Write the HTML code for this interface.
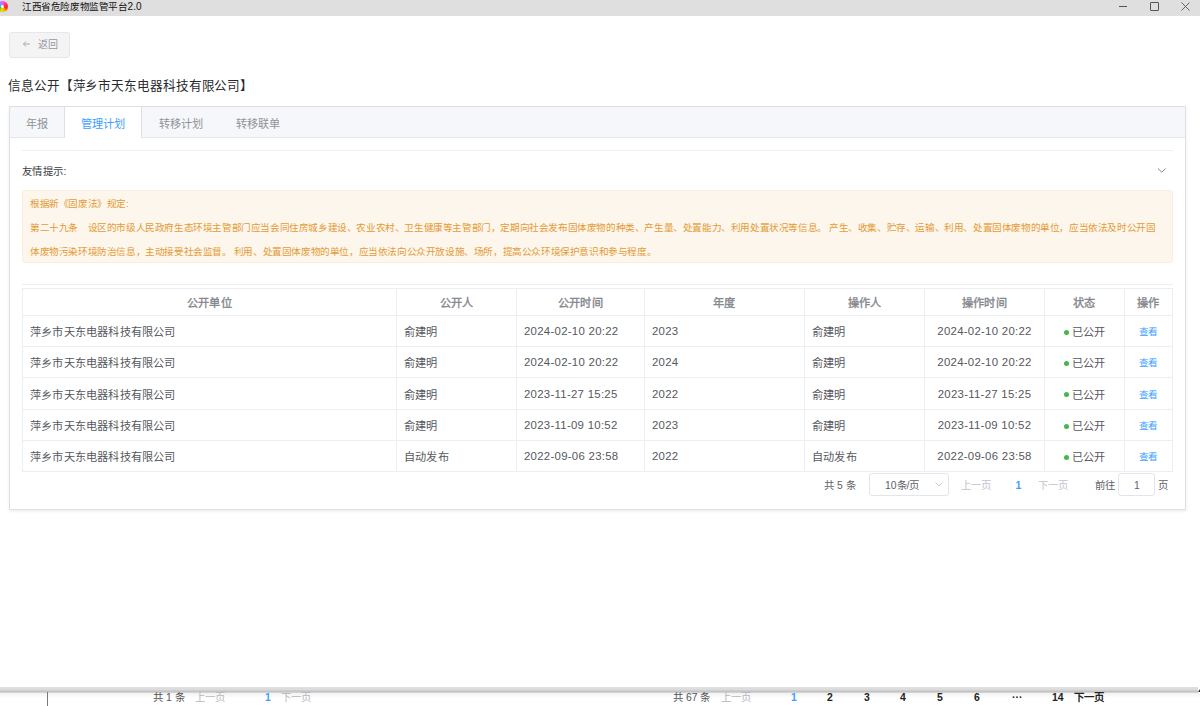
<!DOCTYPE html>
<html lang="zh-CN"><head><meta charset="utf-8">
<style>
*{box-sizing:border-box;margin:0;padding:0}
html,body{width:1200px;height:706px;overflow:hidden;background:#fff;font-family:"Liberation Sans",sans-serif;position:relative}
.abs{position:absolute;white-space:nowrap}
#titlebar{left:0;top:0;width:1200px;height:16px;background:#dfdfdf}
#title{left:22px;top:0;height:16px;line-height:14px;font-size:9.6px;letter-spacing:-0.4px;color:#111}
#back{left:9px;top:32px;width:61px;height:26px;background:#f4f4f5;border:1px solid #e4e7ed;border-radius:3px}
#backtxt{left:38px;top:36px;line-height:17px;font-size:10px;color:#96989e}
#heading{left:8px;top:77px;line-height:18px;font-size:12.6px;letter-spacing:-0.1px;color:#282a2e}
#card{left:9px;top:106px;width:1177px;height:404px;border:1px solid #dcdfe6;box-shadow:0 1.5px 3px 0 rgba(0,0,0,.07);background:#fff}
#tabhead{left:10px;top:107px;width:1175px;height:31px;background:#f5f7fa;border-bottom:1px solid #e4e7ed}
.tab{position:absolute;top:107px;height:31px;line-height:34px;font-size:11.2px;color:#909399;text-align:center;white-space:nowrap}
.tab.active{background:#fff;color:#409eff;border-left:1px solid #dcdfe6;border-right:1px solid #dcdfe6;height:31px}
#col-top{left:22px;top:150px;width:1151px;height:1px;background:#ebeef5}
#tip{left:22px;top:162px;line-height:19px;font-size:10.4px;letter-spacing:0.4px;color:#3a3b3f}
#alert{left:22px;top:190px;width:1151px;height:73px;background:#fdf6ec;border:1px solid #fbeedc;border-radius:3px}
.al{position:absolute;left:30px;font-size:9.6px;letter-spacing:-0.4px;line-height:12px;color:#e29b36;white-space:nowrap}
#col-bot{left:22px;top:284px;width:1151px;height:1px;background:#ebeef5}
table{position:absolute;left:22px;top:288px;border-collapse:collapse;table-layout:fixed;font-size:11.2px;letter-spacing:0.2px;color:#56585e}
td.d{font-size:11.4px;letter-spacing:0.28px}
td,th{border:1px solid #ebeef5;padding:0 7px;white-space:nowrap;overflow:hidden}
th{height:27px;color:#83868d;font-weight:normal;-webkit-text-stroke:0.35px #83868d;text-align:center}
td{height:31px}
td.c{text-align:center}
tr.r3 td{height:32px}
.dot{display:inline-block;width:5px;height:5px;border-radius:50%;background:#45b649;vertical-align:middle;margin-right:3px;position:relative;top:-1px}
.link{color:#409eff;font-size:9.6px;letter-spacing:-0.4px}
.pg{position:absolute;font-size:10.4px;line-height:14px;color:#606266;white-space:nowrap}
#sel{left:869px;top:473px;width:80px;height:23px;border:1px solid #e2e5eb;border-radius:3px}
#inp{left:1118px;top:473px;width:37px;height:23px;border:1px solid #e2e5eb;border-radius:3px}
#bottom-band{left:0;top:687px;width:1198px;height:6px;background:linear-gradient(#e0e0e0 0,#dadada 3px,#c2c2c2 4px,#c8c8c8 5px,#dedede 6px)}
#bottom-line{display:none}
#bottom-grad{left:0;top:693px;width:1200px;height:13px;background:linear-gradient(#f2f2f2,#fff 5px)}
.bt{position:absolute;top:690px;line-height:16px;font-size:10.4px;white-space:nowrap}
</style></head><body>
<div class="abs" id="titlebar"></div>
<div class="abs" style="left:-3px;top:1px;width:11px;height:11px;border-radius:50%;background:conic-gradient(#ff50ff 0deg,#ff2a2a 80deg,#ff3010 110deg,#ffa800 150deg,#ffd800 190deg,#30d030 240deg,#20c8ff 300deg,#ff50ff 360deg)"></div>
<div class="abs" style="left:1px;top:5px;width:3px;height:3px;border-radius:50%;background:#fff"></div>
<div class="abs" id="title">江西省危险废物监管平台<span style="letter-spacing:0;font-size:10px">2.0</span></div>
<div class="abs" style="left:1119px;top:6px;width:8px;height:1px;background:#555"></div>
<div class="abs" style="left:1150px;top:2px;width:9px;height:9px;border:1px solid #555;border-radius:1px"></div>
<svg class="abs" style="left:1181px;top:2px" width="9" height="9" viewBox="0 0 9 9"><path d="M0.5 0.5L8.5 8.5M8.5 0.5L0.5 8.5" stroke="#555" stroke-width="0.9"/></svg>

<div class="abs" id="back"></div>
<svg class="abs" style="left:22px;top:40px" width="9" height="8" viewBox="0 0 9 8"><path d="M1.5 4H8M4 1.5L1.5 4L4 6.5" stroke="#a0a3aa" stroke-width="0.9" fill="none"/></svg>
<div class="abs" id="backtxt">返回</div>

<div class="abs" id="heading">信息公开【萍乡市天东电器科技有限公司】</div>

<div class="abs" id="card"></div>
<div class="abs" id="tabhead"></div>
<div class="tab" style="left:10px;width:54px">年报</div>
<div class="tab active" style="left:64px;width:78px">管理计划</div>
<div class="tab" style="left:142px;width:77px">转移计划</div>
<div class="tab" style="left:219px;width:77px">转移联单</div>

<div class="abs" id="col-top"></div>
<div class="abs" id="tip">友情提示:</div>
<svg class="abs" style="left:1157px;top:167px" width="10" height="7" viewBox="0 0 10 7"><path d="M1 1.5L4.8 5.2L8.6 1.5" stroke="#6f727a" stroke-width="0.9" fill="none"/></svg>
<div class="abs" id="alert"></div>
<div class="al" style="top:198px">根据新《固废法》规定:</div>
<div class="al" style="top:222px">第二十九条　设区的市级人民政府生态环境主管部门应当会同住房城乡建设、农业农村、卫生健康等主管部门，定期向社会发布固体废物的种类、产生量、处置能力、利用处置状况等信息。 产生、收集、贮存、运输、利用、处置固体废物的单位，应当依法及时公开固</div>
<div class="al" style="top:246px">体废物污染环境防治信息，主动接受社会监督。 利用、处置固体废物的单位，应当依法向公众开放设施、场所，提高公众环境保护意识和参与程度。</div>
<div class="abs" id="col-bot"></div>

<table>
<colgroup><col style="width:374px"><col style="width:120px"><col style="width:128px"><col style="width:160px"><col style="width:120px"><col style="width:120px"><col style="width:80px"><col style="width:48px"></colgroup>
<tr><th>公开单位</th><th>公开人</th><th>公开时间</th><th>年度</th><th>操作人</th><th>操作时间</th><th>状态</th><th>操作</th></tr>
<tr><td>萍乡市天东电器科技有限公司</td><td>俞建明</td><td class="d">2024-02-10 20:22</td><td class="d">2023</td><td>俞建明</td><td class="c d">2024-02-10 20:22</td><td class="c"><span class="dot"></span>已公开</td><td class="c"><span class="link">查看</span></td></tr>
<tr><td>萍乡市天东电器科技有限公司</td><td>俞建明</td><td class="d">2024-02-10 20:22</td><td class="d">2024</td><td>俞建明</td><td class="c d">2024-02-10 20:22</td><td class="c"><span class="dot"></span>已公开</td><td class="c"><span class="link">查看</span></td></tr>
<tr class="r3"><td>萍乡市天东电器科技有限公司</td><td>俞建明</td><td class="d">2023-11-27 15:25</td><td class="d">2022</td><td>俞建明</td><td class="c d">2023-11-27 15:25</td><td class="c"><span class="dot"></span>已公开</td><td class="c"><span class="link">查看</span></td></tr>
<tr><td>萍乡市天东电器科技有限公司</td><td>俞建明</td><td class="d">2023-11-09 10:52</td><td class="d">2023</td><td>俞建明</td><td class="c d">2023-11-09 10:52</td><td class="c"><span class="dot"></span>已公开</td><td class="c"><span class="link">查看</span></td></tr>
<tr><td>萍乡市天东电器科技有限公司</td><td>自动发布</td><td class="d">2022-09-06 23:58</td><td class="d">2022</td><td>自动发布</td><td class="c d">2022-09-06 23:58</td><td class="c"><span class="dot"></span>已公开</td><td class="c"><span class="link">查看</span></td></tr>
</table>

<div class="pg" style="left:824px;top:479px">共 5 条</div>
<div class="abs" id="sel"></div>
<div class="pg" style="left:885px;top:479px">10条/页</div>
<svg class="abs" style="left:935px;top:482px" width="8" height="5" viewBox="0 0 8 5"><path d="M0.5 0.5L4 4L7.5 0.5" stroke="#c0c4cc" stroke-width="0.9" fill="none"/></svg>
<div class="pg" style="left:961px;top:479px;color:#c0c4cc">上一页</div>
<div class="pg" style="left:1015.5px;top:479px;color:#409eff;font-weight:bold">1</div>
<div class="pg" style="left:1038px;top:479px;color:#c0c4cc">下一页</div>
<div class="pg" style="left:1095px;top:479px">前往</div>
<div class="abs" id="inp"></div>
<div class="pg" style="left:1134px;top:479px">1</div>
<div class="pg" style="left:1158px;top:479px">页</div>

<div class="abs" id="bottom-grad"></div>
<div class="abs" id="bottom-band"></div>
<div class="abs" id="bottom-line"></div>
<div class="abs" style="left:1198px;top:689px;width:0;height:0;border-left:2px solid transparent;border-bottom:3px solid #222"></div>
<div class="abs" style="left:47px;top:692px;width:1px;height:14px;background:#7a7a7a"></div>
<div class="bt" style="left:153px;color:#555">共 1 条</div>
<div class="bt" style="left:195px;color:#b4b7bd">上一页</div>
<div class="bt" style="left:265px;color:#409eff;font-weight:bold">1</div>
<div class="bt" style="left:281px;color:#b4b7bd">下一页</div>
<div class="bt" style="left:673px;color:#555">共 67 条</div>
<div class="bt" style="left:721px;color:#b4b7bd">上一页</div>
<div class="bt" style="left:791px;color:#409eff;font-weight:bold">1</div>
<div class="bt" style="left:827px;color:#222;font-weight:bold">2</div>
<div class="bt" style="left:864px;color:#222;font-weight:bold">3</div>
<div class="bt" style="left:900px;color:#222;font-weight:bold">4</div>
<div class="bt" style="left:937px;color:#222;font-weight:bold">5</div>
<div class="bt" style="left:974px;color:#222;font-weight:bold">6</div>
<div class="bt" style="left:1012px;color:#222;font-weight:bold">···</div>
<div class="bt" style="left:1052px;color:#222;font-weight:bold">14</div>
<div class="bt" style="left:1074px;color:#222;font-weight:bold">下一页</div>
</body></html>
